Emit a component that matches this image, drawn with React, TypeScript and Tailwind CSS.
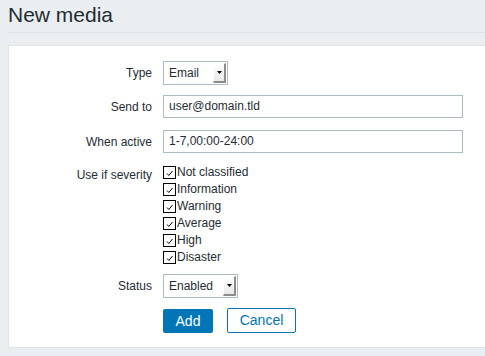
import React from 'react';

const severities = ['Not classified', 'Information', 'Warning', 'Average', 'High', 'Disaster'];

function Select({ value, width }: { value: string; width: string }) {
  return (
    <div className={`${width} h-[24px] border border-[#acbbc2] bg-white flex items-stretch`}>
      <span className="flex-1 pl-[5px] leading-[22px]">{value}</span>
      <span className="w-[13px] my-px mr-px flex items-center justify-center bg-gradient-to-b from-white to-[#e8e8e8] border-r-2 border-b-2 border-[#8c8c8c] border-l border-t border-l-white border-t-white">
        <svg width="5" height="3" viewBox="0 0 5 3">
          <path d="M0 0 L5 0 L2.5 3 Z" fill="#000" />
        </svg>
      </span>
    </div>
  );
}

function Check({ label }: { label: string }) {
  return (
    <label className="h-[17px] flex items-center">
      <span className="w-[13px] h-[13px] border border-black bg-white mt-[2px] flex items-center justify-center">
        <svg width="11" height="11" viewBox="0 0 11 11">
          <path d="M3 6.5 L4.8 8.5 L8.5 4" fill="none" stroke="#000" strokeWidth="1" />
        </svg>
      </span>
      <span className="ml-px">{label}</span>
    </label>
  );
}

function Row({ label, children, className = '' }: { label: string; children: React.ReactNode; className?: string }) {
  return (
    <div className={`flex ${className}`}>
      <div className="w-[143px] shrink-0 text-right leading-[24px]">{label}</div>
      <div className="ml-[11px]">{children}</div>
    </div>
  );
}

export default function App() {
  return (
    <div
      className="min-h-[356px] bg-[#ebeef0] pl-[8px] text-[12px] text-[#1f2c33] overflow-hidden"
      style={{ fontFamily: '"Liberation Sans", Arial, sans-serif' }}
    >
      <div className="border-b border-[#dce1e4] pt-[3px] pb-[5px]">
        <h1 className="text-[21px] leading-[24px] font-normal">New media</h1>
      </div>

      <div className="mt-[12px] bg-white border-l border-t border-b border-[#dfe4e7] pt-[15px] pb-[14px]">
        <Row label="Type">
          <Select value="Email" width="w-[65px]" />
        </Row>
        <Row label="Send to" className="mt-[10px]">
          <div className="w-[300px] h-[23px] border border-[#acbbc2] pl-[5px] leading-[21px]">user@domain.tld</div>
        </Row>
        <Row label="When active" className="mt-[11px]">
          <div className="w-[300px] h-[23px] border border-[#acbbc2] pl-[5px] leading-[21px]">1-7,00:00-24:00</div>
        </Row>
        <Row label="Use if severity" className="mt-[9px]">
          <div className="flex flex-col">
            {severities.map((s) => (
              <Check key={s} label={s} />
            ))}
          </div>
        </Row>
        <Row label="Status" className="mt-[9px]">
          <Select value="Enabled" width="w-[75px]" />
        </Row>
        <Row label="" className="mt-[11px]">
          <div className="flex gap-[14px]">
            <button className="w-[50px] h-[24px] bg-[#0275b8] text-white text-[14px] rounded-[2px]">Add</button>
            <button className="w-[69px] h-[25px] -mt-px bg-white border border-[#0275b8] text-[#0275b8] text-[14px] rounded-[2px]">
              Cancel
            </button>
          </div>
        </Row>
      </div>
    </div>
  );
}
